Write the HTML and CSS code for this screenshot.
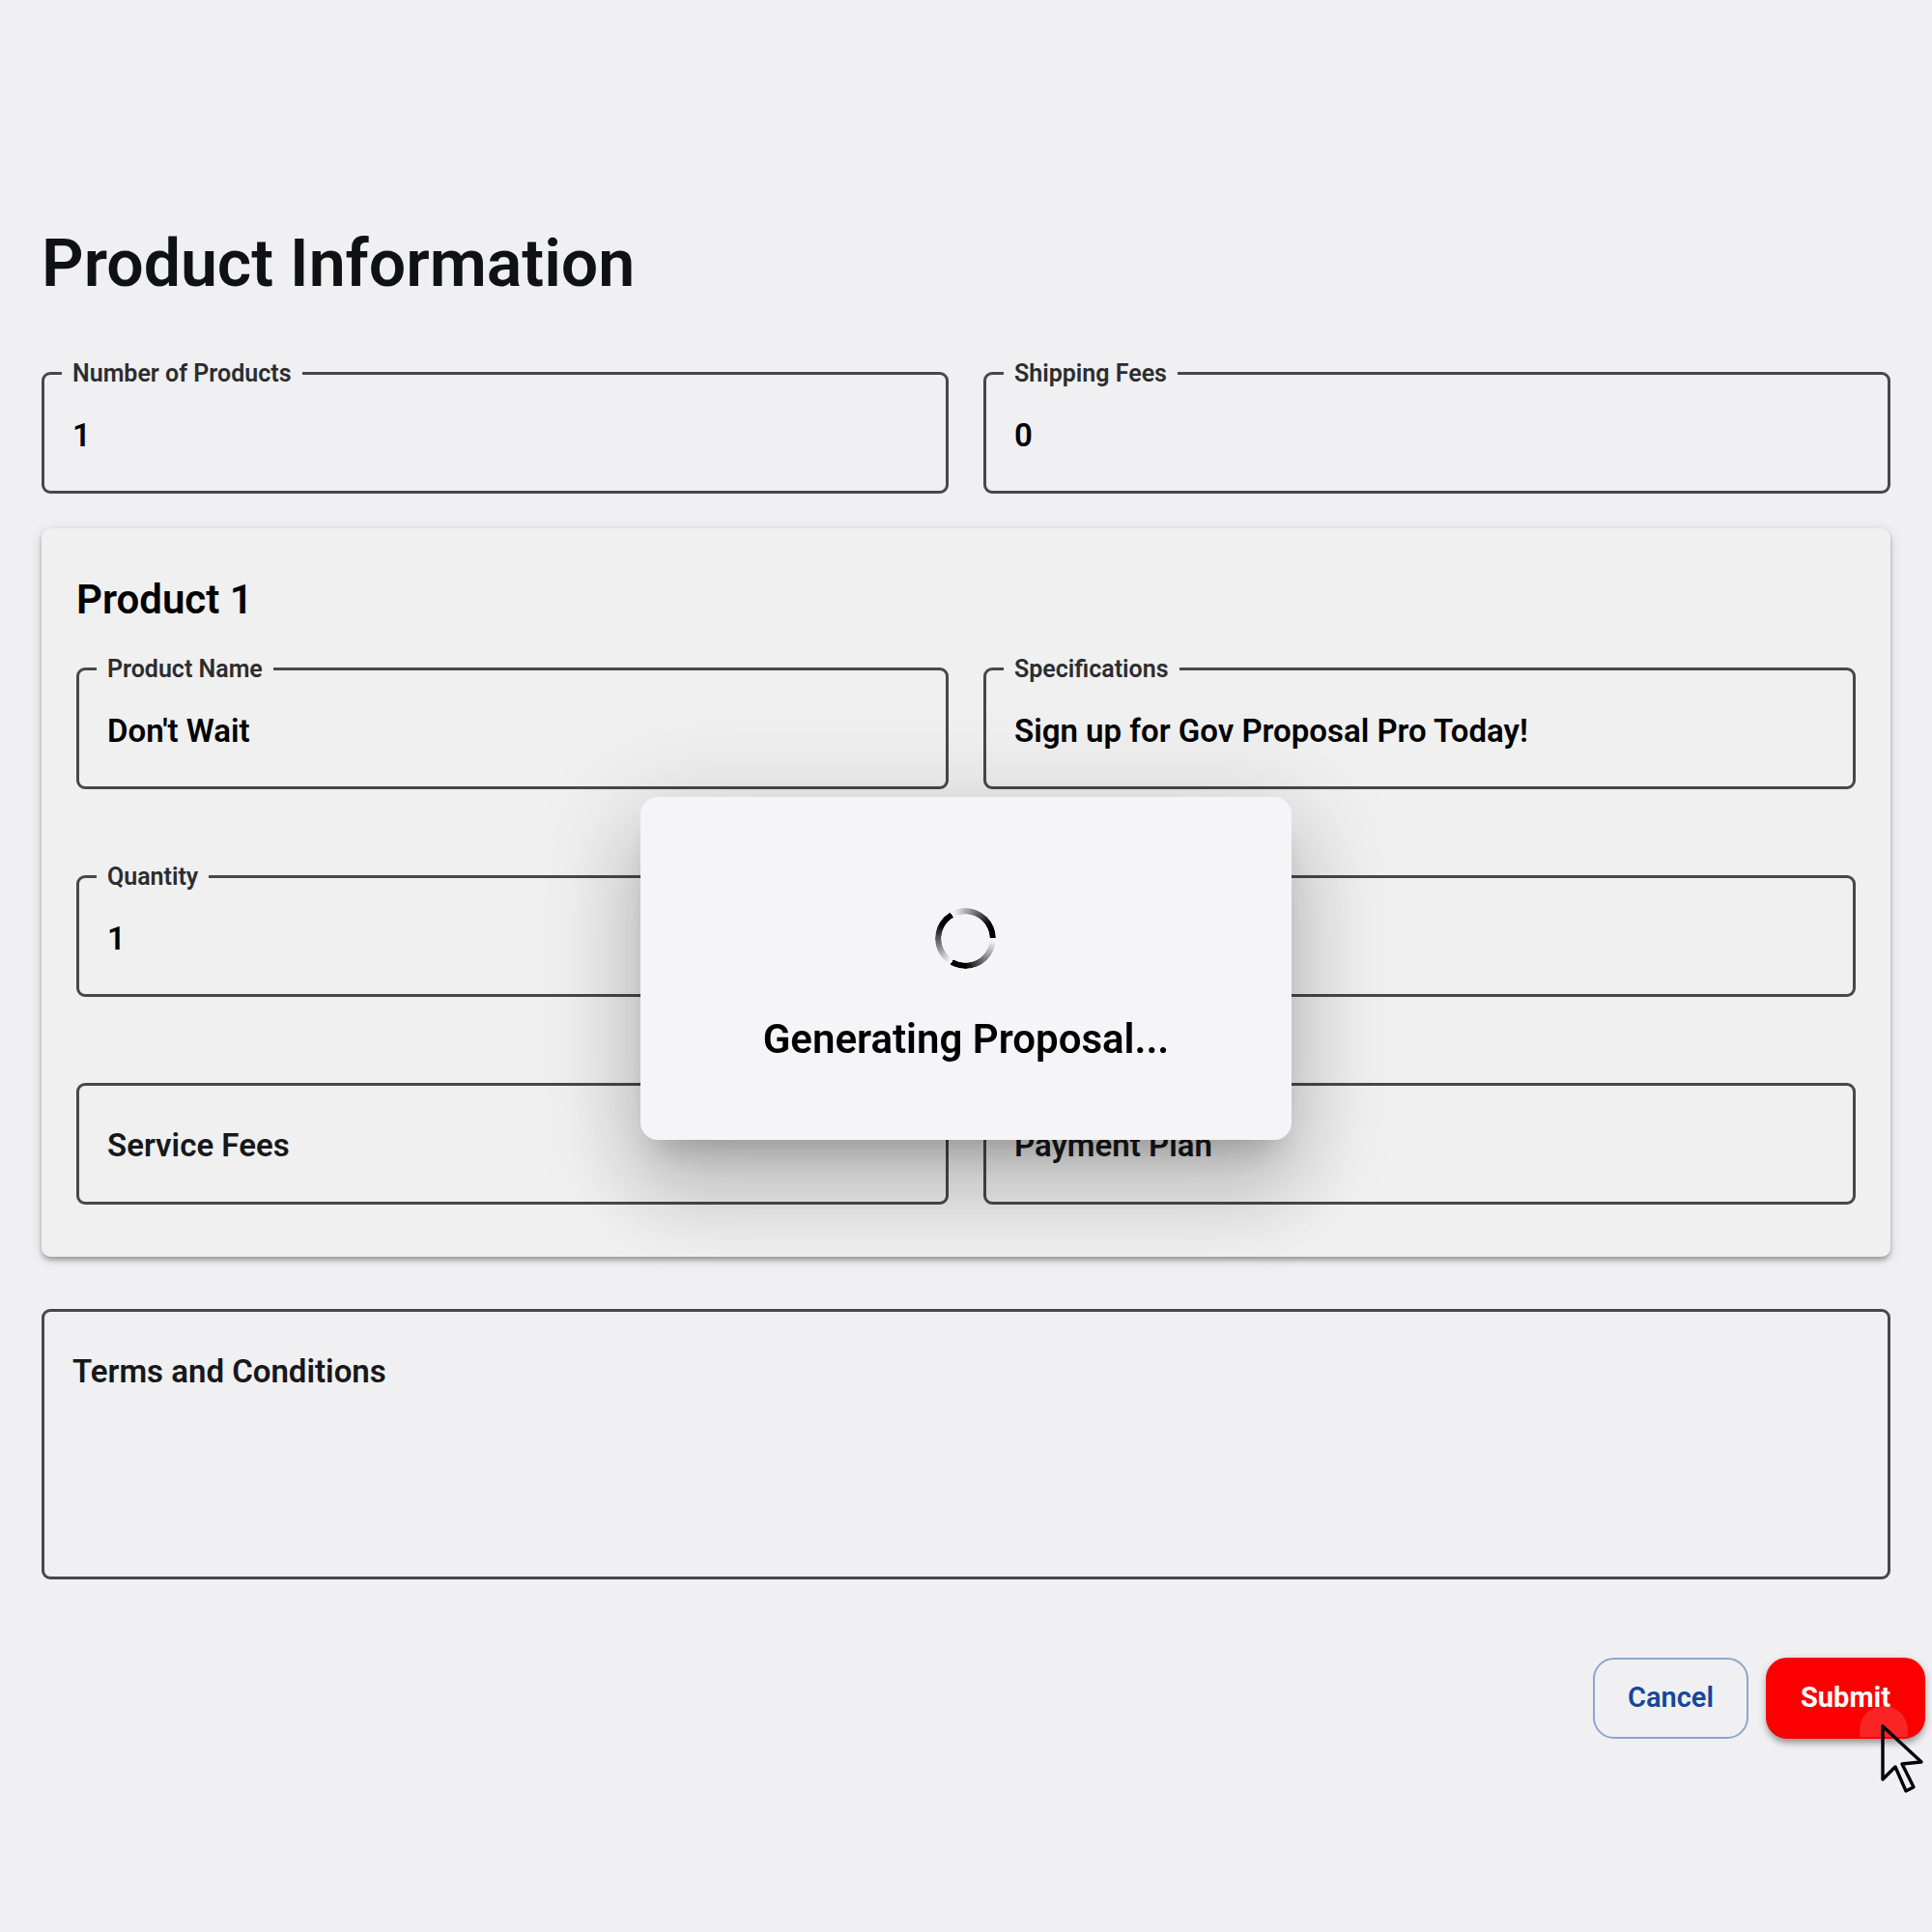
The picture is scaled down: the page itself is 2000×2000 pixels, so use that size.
FILE: index.html
```html
<!DOCTYPE html>
<html lang="en">

<head>
    <meta charset="UTF-8">
    <title>Product Information</title>
    <link rel="stylesheet" href="styles.css">
</head>

<body>
    <form class="proposal-form">
        <h1>Product Information</h1>

        <div class="row">
            <div class="field">
                <label for="numProducts">Number of Products</label>
                <input type="text" id="numProducts" value="1">
            </div>
            <div class="field">
                <label for="shippingFees">Shipping Fees</label>
                <input type="text" id="shippingFees" value="0">
            </div>
        </div>

        <div class="card">
            <h2>Product 1</h2>
            <div class="card-fields">
                <div class="field">
                    <label for="productName">Product Name</label>
                    <input type="text" id="productName" value="Don't Wait">
                </div>
                <div class="field">
                    <label for="specifications">Specifications</label>
                    <input type="text" id="specifications" value="Sign up for Gov Proposal Pro Today!">
                </div>
                <div class="field">
                    <label for="quantity">Quantity</label>
                    <input type="text" id="quantity" value="1">
                </div>
                <div class="field">
                    <input type="text" id="unitPrice" aria-label="Unit Price">
                </div>
                <div class="field empty">
                    <label for="serviceFees">Service Fees</label>
                    <input type="text" id="serviceFees">
                </div>
                <div class="field empty">
                    <label for="paymentPlan">Payment Plan</label>
                    <input type="text" id="paymentPlan">
                </div>
            </div>
        </div>

        <div class="field empty terms">
            <label for="terms">Terms and Conditions</label>
            <textarea id="terms"></textarea>
        </div>

        <div class="actions">
            <button type="button" class="btn cancel">Cancel</button>
            <div class="submit-wrap">
                <button type="button" class="btn submit">Submit<span class="ripple"></span></button>
                <svg class="cursor" width="48" height="76" viewBox="0 0 48 76">
                    <path d="M4 4 L4 59 L17 46 L28 71 L36 67 L24 43 L44 41 Z" fill="none" stroke="#000" stroke-width="3.400" stroke-linejoin="round" />
                </svg>
            </div>
        </div>
    </form>

    <div class="overlay">
        <div class="dialog" role="dialog" aria-labelledby="dialogText">
            <div class="spinner"></div>
            <p id="dialogText">Generating Proposal...</p>
        </div>
    </div>
</body>

</html>
```
FILE: styles.css
```css
* {
    box-sizing: border-box;
}

body {
    margin: 0;
    min-height: 100vh;
    font-family: Roboto, sans-serif;
    font-weight: 600;
    background-color: #f0f0f2;
    color: #101113;
}

.proposal-form {
    padding: 225px 43px 80px;
}

h1 {
    margin: 0 0 64px;
    font-size: 68px;
    line-height: 96px;
    font-weight: 600;
}

.row,
.card-fields {
    display: grid;
    grid-template-columns: 1fr 1fr;
    column-gap: 36px;
}

.card-fields {
    row-gap: 89px;
}

.field {
    position: relative;
    height: 126px;
    border: 3px solid #47484a;
    border-radius: 9px;
}

.field label {
    position: absolute;
    top: -17px;
    left: 18px;
    padding: 0 11px;
    font-size: 25px;
    line-height: 32px;
    color: #2c2d2f;
    background-color: #f0f0f2;
}

.card .field label {
    background-color: #f0f0f0;
}

.field.empty label {
    top: 38px;
    font-size: 33px;
    line-height: 48px;
    color: #17181a;
    background: none;
}

.field input,
.field textarea {
    display: block;
    width: 100%;
    height: 100%;
    padding: 4px 29px 0;
    border: none;
    outline: none;
    background: none;
    font-family: inherit;
    font-weight: 600;
    font-size: 33px;
    color: #000;
    resize: none;
}

.card {
    margin: 36px 0 54px;
    padding: 36px 36px 54px;
    border-radius: 9px;
    background-color: #f0f0f0;
    box-shadow: 0 5px 6px -2px rgba(0, 0, 0, 0.25), 0 2px 4px rgba(0, 0, 0, 0.14), 0 2px 14px rgba(0, 0, 0, 0.12);
}

h2 {
    margin: 0 0 32px;
    font-size: 42px;
    line-height: 76px;
    font-weight: 600;
    color: #000;
}

.field.terms {
    height: 280px;
}

.actions {
    display: flex;
    justify-content: flex-end;
    gap: 18px;
    margin: 81px -36px 0 0;
}

.btn {
    height: 84px;
    padding: 0 34px 2px;
    border: 2px solid #8fa5cf;
    border-radius: 22px;
    background: none;
    font-family: inherit;
    font-weight: 600;
    font-size: 29px;
    color: #18469a;
    cursor: pointer;
}

.submit-wrap {
    position: relative;
}

.submit {
    position: relative;
    overflow: hidden;
    border-color: #fb0000;
    background-color: #fb0000;
    color: #fff;
    font-weight: 700;
    box-shadow: 0 6px 6px -2px rgba(0, 0, 0, 0.25), 0 3px 10px rgba(0, 0, 0, 0.2);
}

.ripple {
    position: absolute;
    right: 16px;
    bottom: -18px;
    width: 50px;
    height: 50px;
    border-radius: 50%;
    background-color: rgba(255, 255, 255, 0.14);
}

.cursor {
    position: absolute;
    top: 67px;
    right: 0;
}

.overlay {
    position: fixed;
    inset: 0;
    display: flex;
    justify-content: center;
    align-items: center;
    padding-top: 4px;
}

.dialog {
    display: flex;
    flex-direction: column;
    align-items: center;
    gap: 40px;
    padding: 115px 127px 71px;
    border-radius: 18px;
    background-color: #f5f5f8;
    box-shadow: 0 25px 34px -16px rgba(0, 0, 0, 0.2), 0 54px 86px 7px rgba(0, 0, 0, 0.14), 0 20px 104px 18px rgba(0, 0, 0, 0.12);
}

.dialog p {
    margin: 0;
    font-size: 42px;
    line-height: 66px;
    color: #000;
}

/* ring with three fading tails */
.spinner {
    width: 63px;
    height: 63px;
    border-radius: 50%;
    background: repeating-conic-gradient(from 90deg, transparent 0deg, transparent 5deg, #000 90deg, #000 120deg);
    mask: radial-gradient(closest-side, transparent 79%, #000 81%);
}
```
